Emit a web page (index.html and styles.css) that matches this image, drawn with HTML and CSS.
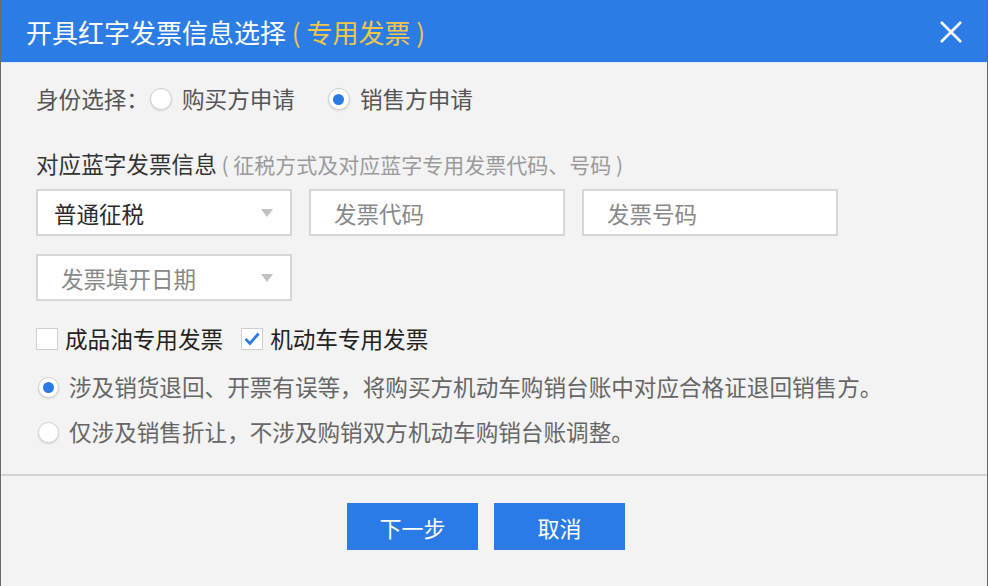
FILE: index.html
```html
<!DOCTYPE html>
<html lang="zh-CN">
<head>
  <meta charset="UTF-8">
  <title>开具红字发票信息选择</title>
  <meta name="viewport" content="width=device-width, initial-scale=1.0" />
  <link rel="stylesheet" href="styles.css">
</head>
<body>

  <div class="dialog">
    <!-- Header -->
    <div class="dialog-header">
      <h1 class="dialog-title">开具红字发票信息选择<span class="title-type"> ( 专用发票 )</span></h1>
      <span class="close-btn">
        <svg width="24" height="24" viewBox="0 0 24 24">
          <path d="M2 2 L22 22 M22 2 L2 22" stroke="#fff" stroke-width="2.6" fill="none"/>
        </svg>
      </span>
    </div>

    <!-- Body -->
    <div class="dialog-body">
      <div class="identity-row">
        <span class="identity-label">身份选择：</span>
        <label class="radio"><span class="radio-dot"></span>购买方申请</label>
        <label class="radio checked"><span class="radio-dot"></span>销售方申请</label>
      </div>

      <div class="section-title">对应蓝字发票信息<span class="hint"> ( 征税方式及对应蓝字专用发票代码、号码 )</span></div>

      <div class="fields">
        <div class="select"><span class="value">普通征税</span><span class="arrow"></span></div>
        <div class="input placeholder">发票代码</div>
        <div class="input placeholder">发票号码</div>
        <div class="select placeholder"><span>发票填开日期</span><span class="arrow"></span></div>
      </div>

      <div class="check-row">
        <label class="checkbox"><span class="box"></span>成品油专用发票</label>
        <label class="checkbox checked">
          <span class="box">
            <svg width="16" height="16" viewBox="0 0 16 16">
              <path d="M1.5 8 L6 12.5 L14.5 2.5" stroke="#2b7be6" stroke-width="2.8" fill="none"/>
            </svg>
          </span>机动车专用发票
        </label>
      </div>

      <label class="radio option checked"><span class="radio-dot"></span>涉及销货退回、开票有误等，将购买方机动车购销台账中对应合格证退回销售方。</label>
      <label class="radio option second"><span class="radio-dot"></span>仅涉及销售折让，不涉及购销双方机动车购销台账调整。</label>
    </div>

    <!-- Footer -->
    <div class="dialog-footer">
      <button class="btn">下一步</button>
      <button class="btn">取消</button>
    </div>
  </div>

</body>
</html>
```

FILE: styles.css
```css
* { box-sizing: border-box; }

body {
  margin: 0;
  padding: 0;
  font-family: "Noto Sans CJK SC", "Noto Sans", sans-serif;
  background-color: #f3f3f4;
}

/* Dialog frame */
.dialog {
  width: 988px;
  height: 586px;
  background-color: #f3f3f4;
  border-left: 1px solid #6a6a6a;
  border-right: 1px solid #6a6a6a;
  overflow: hidden;
}

.dialog-header {
  height: 63px;
  background-color: #2b7ce4;
  display: flex;
  align-items: center;
  justify-content: space-between;
  padding: 2px 24px 0 25px;
  border-bottom: 1px solid #dfe9f7;
}

.dialog-title {
  margin: 0;
  font-size: 26px;
  font-weight: normal;
  color: #fff;
  line-height: 34px;
  white-space: pre;
}

.title-type { color: #f3c649; }

.close-btn {
  display: flex;
  width: 24px;
  height: 24px;
}

/* Body */
.dialog-body {
  height: 411px;
  padding: 21px 0 0 35px;
  font-size: 22.6px;
  line-height: 30px;
  color: #555;
}

.identity-row {
  display: flex;
  align-items: center;
  height: 30px;
}

.identity-label { margin-right: 1px; }

.radio {
  display: flex;
  align-items: center;
  gap: 10px;
  margin-right: 33px;
}

.radio-dot {
  width: 22px;
  height: 22px;
  border-radius: 50%;
  background: #fff;
  border: 1px solid #d2d2d2;
  box-shadow: 0 1px 2px rgba(0,0,0,0.12);
  display: flex;
  align-items: center;
  justify-content: center;
  flex-shrink: 0;
}

.radio.checked .radio-dot::after {
  content: "";
  width: 11px;
  height: 11px;
  border-radius: 50%;
  background: #2b7be6;
}

.section-title {
  margin-top: 35px;
  color: #333;
  height: 30px;
  white-space: pre;
}

.hint {
  font-size: 21px;
  color: #9a9a9a;
}

/* Fields */
.fields {
  display: grid;
  grid-template-columns: repeat(3, 256px);
  column-gap: 17px;
  row-gap: 18px;
  margin-top: 10px;
}

.select, .input {
  height: 47px;
  background: #fff;
  border: 2px solid #d6d6d6;
  display: flex;
  align-items: center;
  justify-content: space-between;
  padding: 0 17px 0 16px;
  color: #2a2a2a;
  font-size: 22.5px;
}

.placeholder {
  color: #888;
  padding-left: 23px;
}

.arrow {
  width: 0;
  height: 0;
  border-left: 6px solid transparent;
  border-right: 6px solid transparent;
  border-top: 8px solid #c2c2c2;
}

/* Checkboxes */
.check-row {
  display: flex;
  align-items: center;
  margin-top: 23px;
  height: 30px;
  color: #222;
}

.checkbox {
  display: flex;
  align-items: center;
  gap: 7px;
  margin-right: 18px;
}

.box {
  width: 22px;
  height: 22px;
  background: #fff;
  border: 1px solid #cfcfcf;
  display: flex;
  align-items: center;
  justify-content: center;
}

/* Options */
.option {
  margin-top: 18px;
  padding-left: 2px;
  height: 30px;
  color: #666;
}

.option .radio-dot {
  width: 21px;
  height: 21px;
}

.option.second { margin-top: 15px; }

/* Footer */
.dialog-footer {
  border-top: 2px solid #d4d4d4;
  padding: 27px 16px 0 0;
  display: flex;
  justify-content: center;
  gap: 16px;
}

.btn {
  width: 131px;
  height: 47px;
  border: none;
  background-color: #2b7be6;
  color: #fff;
  font-family: inherit;
  font-size: 22px;
  cursor: pointer;
}
```
